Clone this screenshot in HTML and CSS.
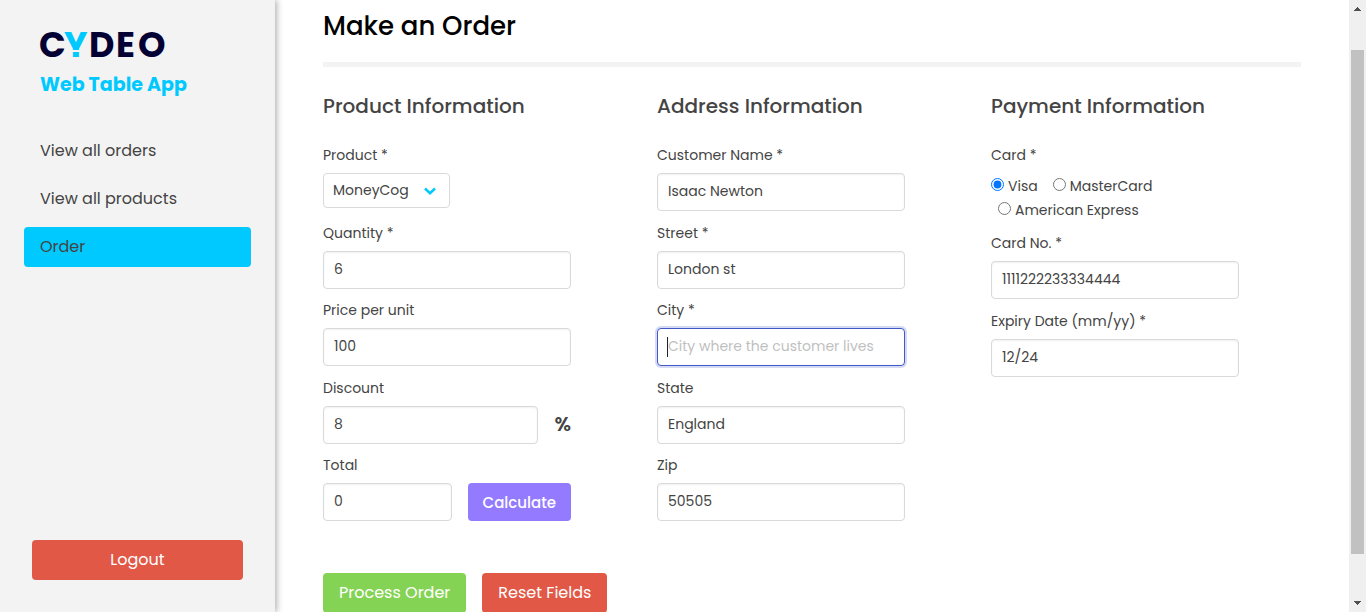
FILE: index.html
```html
<!DOCTYPE html>
<html lang="en">
<head>
<meta charset="utf-8">
<meta name="viewport" content="width=device-width, initial-scale=1">
<title>Web Table App - Order</title>
<link rel="stylesheet" href="styles.css">
</head>
<body>
<div class="app">
  <aside class="sidebar">
    <svg class="logo" viewBox="0 0 126 26" role="img" aria-label="Cydeo">
      <text class="logo-text" x="-1 24 49 76 98" y="25">C<tspan class="logo-accent">Y</tspan>DEO</text>
      <rect class="logo-gap" x="30" y="18" width="14" height="2"/>
    </svg>
    <h2 class="app-name">Web Table App</h2>
    <nav class="menu">
      <a class="menu-link" href="#">View all orders</a>
      <a class="menu-link" href="#">View all products</a>
      <a class="menu-link active" href="#">Order</a>
    </nav>
    <button class="btn btn-red logout" type="button">Logout</button>
  </aside>

  <main class="content">
    <h1 class="title">Make an Order</h1>
    <hr class="rule">
    <form class="order">
      <div class="columns">
        <section class="column">
          <h3 class="column-title">Product Information</h3>
          <div class="field">
            <label for="product">Product *</label>
            <div class="select">
              <select id="product"><option>MoneyCog</option></select>
              <svg class="chevron" viewBox="0 0 12 8" aria-hidden="true"><path d="M1 1.500 6 6.200l5-4.700"/></svg>
            </div>
          </div>
          <div class="field">
            <label for="quantity">Quantity *</label>
            <input class="input" id="quantity" type="text" value="6">
          </div>
          <div class="field">
            <label for="price">Price per unit</label>
            <input class="input" id="price" type="text" value="100">
          </div>
          <div class="field">
            <label for="discount">Discount</label>
            <div class="field-row">
              <input class="input" id="discount" type="text" value="8">
              <span class="percent">%</span>
            </div>
          </div>
          <div class="field">
            <label for="total">Total</label>
            <div class="field-row">
              <input class="input" id="total" type="text" value="0">
              <button class="btn btn-purple" type="button">Calculate</button>
            </div>
          </div>
        </section>

        <section class="column">
          <h3 class="column-title">Address Information</h3>
          <div class="field">
            <label for="name">Customer Name *</label>
            <input class="input" id="name" type="text" value="Isaac Newton">
          </div>
          <div class="field">
            <label for="street">Street *</label>
            <input class="input" id="street" type="text" value="London st">
          </div>
          <div class="field">
            <label for="city">City *</label>
            <div class="caret-box">
              <input class="input focused" id="city" type="text" placeholder="City where the customer lives">
              <span class="caret"></span>
            </div>
          </div>
          <div class="field">
            <label for="state">State</label>
            <input class="input" id="state" type="text" value="England">
          </div>
          <div class="field">
            <label for="zip">Zip</label>
            <input class="input" id="zip" type="text" value="50505">
          </div>
        </section>

        <section class="column">
          <h3 class="column-title">Payment Information</h3>
          <fieldset class="cards">
            <legend>Card *</legend>
            <div class="card-options">
              <label class="option"><input type="radio" name="card" checked>Visa</label>
              <label class="option"><input type="radio" name="card">MasterCard</label>
              <label class="option indented"><input type="radio" name="card">American Express</label>
            </div>
          </fieldset>
          <div class="field">
            <label for="cardno">Card No. *</label>
            <input class="input" id="cardno" type="text" value="1111222233334444">
          </div>
          <div class="field">
            <label for="expiry">Expiry Date (mm/yy) *</label>
            <input class="input" id="expiry" type="text" value="12/24">
          </div>
        </section>
      </div>
      <div class="actions">
        <button class="btn btn-green" type="button">Process Order</button>
        <button class="btn btn-red" type="reset">Reset Fields</button>
      </div>
    </form>
  </main>

  <div class="scrollbar" aria-hidden="true">
    <svg class="arrow" viewBox="0 0 7 4"><path d="M3 0h1v1h1v1h1v1h1v1H0V3h1V2h1V1h1z"/></svg>
    <div class="track"><div class="thumb"></div></div>
    <svg class="arrow" viewBox="0 0 7 4"><path d="M0 0h7v1H6v1H5v1H4v1H3V3H2V2H1V1H0z"/></svg>
  </div>
</div>
</body>
</html>
```

FILE: styles.css
```css
* {
  box-sizing: border-box;
}

body {
  margin: 0;
  background: #fff;
  color: #444;
  font-family: Poppins, Inter, "Open Sans", sans-serif;
  font-size: 14px;
  font-weight: 400;
}

h1, h2, h3 {
  margin: 0;
}

.app {
  display: grid;
  grid-template-columns: 275px 1fr 17px;
  height: 100vh;
  overflow: hidden;
}

/* Sidebar */

.sidebar {
  display: flex;
  flex-direction: column;
  padding: 32px 24px;
  background: #f3f3f3;
  box-shadow: 2px 0 6px rgba(0, 0, 0, 0.3);
  z-index: 1;
}

.logo {
  width: 126px;
  height: 26px;
  margin-left: 16px;
  overflow: visible;
  flex: none;
}

.logo-text {
  font-size: 35px;
  font-weight: 700;
  fill: #030033;
}

.logo-accent {
  fill: #00c9ff;
}

.logo-gap {
  fill: #f3f3f3;
}

.app-name {
  margin: 13px 0 32px 16px;
  color: #00c9ff;
  font-size: 19px;
  font-weight: 700;
  line-height: 28px;
}

.menu {
  display: flex;
  flex-direction: column;
  gap: 8px;
}

.menu-link {
  padding: 0 16px;
  border-radius: 4px;
  color: #444;
  font-size: 16px;
  line-height: 40px;
  text-decoration: none;
}

.menu-link.active {
  background: #00c9ff;
}

.logout {
  margin: auto 8px 0;
}

/* Buttons */

.btn {
  height: 40px;
  padding: 0 16px 2px;
  border: 0;
  border-radius: 4px;
  color: #fff;
  font-family: inherit;
  font-size: 16px;
  font-weight: 400;
  white-space: nowrap;
}

.btn-red {
  background: #e25847;
}

.btn-green {
  background: #84d355;
}

.btn-purple {
  height: 38px;
  padding: 0 15px;
  background: #937aff;
  font-size: 15px;
  font-weight: 500;
}

/* Order form */

.content {
  min-width: 0;
  padding: 6px 48px 0;
  overflow: hidden;
}

.title {
  color: #000;
  font-size: 26px;
  font-weight: 500;
  line-height: 40px;
}

.rule {
  height: 5px;
  margin: 16px 0 24px;
  border: 0;
  background: #f3f3f3;
}

.columns {
  display: grid;
  grid-template-columns: repeat(3, 1fr);
  gap: 24px;
}

.column {
  width: 80%;
}

.column-title {
  margin-bottom: 22px;
  font-size: 20px;
  font-weight: 500;
  line-height: 30px;
}

.field {
  display: grid;
  grid-template-rows: 30px 38px;
  height: 77px;
}

.field:nth-of-type(odd) {
  height: 78px;
}

.field > label,
.cards legend {
  padding: 0;
  color: #444;
  line-height: 24px;
}

.input {
  width: 100%;
  min-width: 0;
  height: 38px;
  padding: 0 10px 2px;
  border: 1px solid #d9d9d9;
  border-radius: 4px;
  background: #fff;
  color: #444;
  font-family: inherit;
  font-size: 14px;
  box-shadow: inset 0 1px 2px rgba(0, 0, 0, 0.06);
}

.input::placeholder {
  color: #bfbfbf;
}

.input.focused {
  border-color: #4059c4;
  outline: 0;
  box-shadow: 0 0 0 2px #d5dbf5;
}

.caret-box {
  position: relative;
}

.caret {
  position: absolute;
  top: 9px;
  left: 10px;
  width: 1px;
  height: 20px;
  background: #222;
}

.field-row {
  display: flex;
  align-items: center;
  gap: 16px;
}

.percent {
  padding-bottom: 2px;
  font-size: 20px;
  font-weight: 600;
}

.select {
  position: relative;
  width: 127px;
}

.select select {
  width: 100%;
  height: 35px;
  padding: 0 9px 2px;
  border: 1px solid #d9d9d9;
  border-radius: 4px;
  appearance: none;
  background: #fff;
  color: #444;
  font-family: inherit;
  font-size: 14px;
}

.chevron {
  position: absolute;
  top: 14px;
  right: 14px;
  width: 12px;
  height: 8px;
  fill: none;
  stroke: #00c9ff;
  stroke-width: 2.5;
  pointer-events: none;
}

.cards {
  min-width: 0;
  margin: 0;
  padding: 0;
  border: 0;
}

.card-options {
  display: flex;
  flex-wrap: wrap;
  column-gap: 15px;
  padding: 7px 0 9px;
}

.option {
  display: flex;
  align-items: center;
  gap: 4px;
  line-height: 24px;
}

.option input {
  margin: 0 0 3px;
  accent-color: #0075ff;
}

.option.indented {
  padding-left: 7px;
}

.actions {
  display: flex;
  gap: 16px;
  margin-top: 42px;
}

/* Scrollbar */

.scrollbar {
  display: flex;
  flex-direction: column;
  align-items: center;
  padding: 7px 0;
  background: #f0f0f0;
}

.arrow {
  width: 7px;
  height: 4px;
  fill: #505050;
}

.track {
  flex: 1;
  display: flex;
  padding: 39px 0 47px;
}

.thumb {
  width: 13px;
  background: #c1c1c1;
}
```
